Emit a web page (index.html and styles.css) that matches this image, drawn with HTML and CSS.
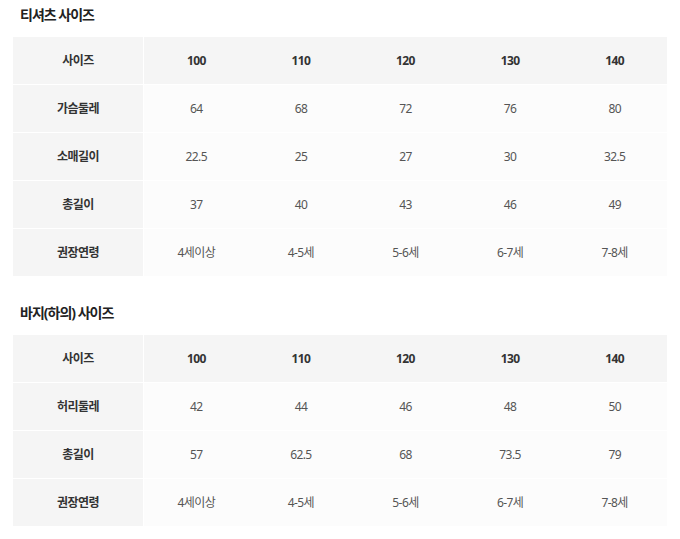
FILE: index.html
```html
<!DOCTYPE html>
<html lang="ko">
<head>
<meta charset="utf-8">
<link rel="stylesheet" href="styles.css">
</head>
<body>
<div class="page">
  <h2 class="title">티셔츠 사이즈</h2>
  <table class="size">
    <tr class="head"><th>사이즈</th><th>100</th><th>110</th><th>120</th><th>130</th><th>140</th></tr>
    <tr><th>가슴둘레</th><td>64</td><td>68</td><td>72</td><td>76</td><td>80</td></tr>
    <tr><th>소매길이</th><td>22.5</td><td>25</td><td>27</td><td>30</td><td>32.5</td></tr>
    <tr><th>총길이</th><td>37</td><td>40</td><td>43</td><td>46</td><td>49</td></tr>
    <tr><th>권장연령</th><td>4세이상</td><td>4-5세</td><td>5-6세</td><td>6-7세</td><td>7-8세</td></tr>
  </table>
  <h2 class="title second">바지(하의) 사이즈</h2>
  <table class="size">
    <tr class="head"><th>사이즈</th><th>100</th><th>110</th><th>120</th><th>130</th><th>140</th></tr>
    <tr><th>허리둘레</th><td>42</td><td>44</td><td>46</td><td>48</td><td>50</td></tr>
    <tr><th>총길이</th><td>57</td><td>62.5</td><td>68</td><td>73.5</td><td>79</td></tr>
    <tr><th>권장연령</th><td>4세이상</td><td>4-5세</td><td>5-6세</td><td>6-7세</td><td>7-8세</td></tr>
  </table>
</div>
</body>
</html>
```
FILE: styles.css
```css
html, body {
  margin: 0;
  padding: 0;
  background: #fff;
}
.page {
  padding: 5px 0 0 13px;
  font-family: "Noto Sans", "Noto Sans CJK KR", sans-serif;
}
.title {
  margin: 0 0 12px 0;
  padding-left: 7px;
  font-size: 14px;
  line-height: 20px;
  font-weight: 700;
  color: #222;
  letter-spacing: -1px;
}
.title.second {
  margin-top: 26px;
}
.size {
  width: 654px;
  border-collapse: separate;
  border-spacing: 0;
  table-layout: fixed;
}
.size th, .size td {
  height: 47px;
  padding: 0;
  text-align: center;
  vertical-align: middle;
  border-bottom: 1px solid #fff;
  font-size: 12px;
  letter-spacing: -0.6px;
  line-height: 16px;
}
.size th {
  background: #f5f5f5;
  color: #333;
  font-weight: 700;
}
.size tr > th:first-child {
  width: 130px;
  border-right: 1px solid #fff;
}
.size td {
  background: #fcfcfc;
  color: #555;
  font-weight: 400;
}
.size .head th {
  background: #f5f5f5;
}
```
